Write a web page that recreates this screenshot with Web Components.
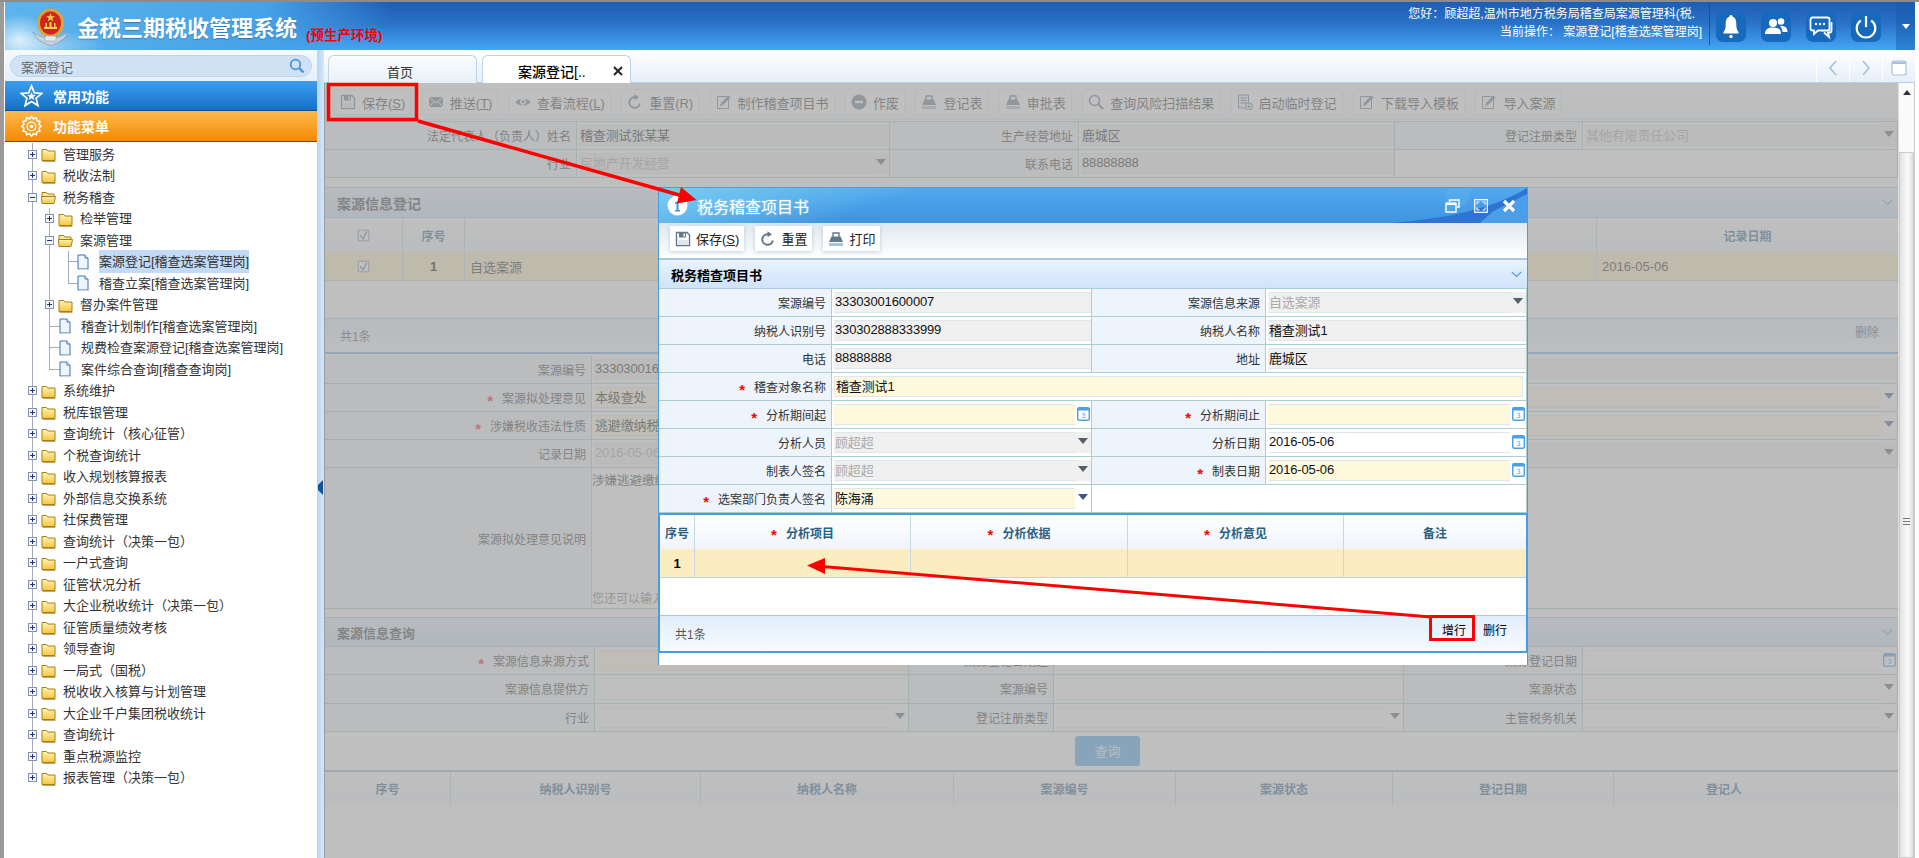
<!DOCTYPE html>
<html lang="zh">
<head>
<meta charset="utf-8">
<title>金税三期税收管理系统</title>
<style>
  html, body { margin: 0; height: 100%; overflow: hidden; background: #fff; }
  body { font-family: "Liberation Sans", "Noto Sans CJK SC", sans-serif; font-size: 12px; color: #333; }
</style>
</head>
<body>
<tax-app>
  <app-header slot="header"></app-header>
  <side-nav slot="side"></side-nav>
  <tab-strip slot="tabs"></tab-strip>

  <tool-bar>
    <tool-button icon="save" hot="S">保存</tool-button>
    <tool-button icon="mail" hot="T">推送</tool-button>
    <tool-button icon="eye" hot="L">查看流程</tool-button>
    <tool-button icon="reload">重置(R)</tool-button>
    <tool-button icon="edit">制作稽查项目书</tool-button>
    <tool-button icon="minus">作废</tool-button>
    <tool-button icon="print">登记表</tool-button>
    <tool-button icon="print">审批表</tool-button>
    <tool-button icon="search">查询风险扫描结果</tool-button>
    <tool-button icon="docplus">启动临时登记</tool-button>
    <tool-button icon="edit">下载导入模板</tool-button>
    <tool-button icon="edit">导入案源</tool-button>
  </tool-bar>

  <form-grid cols="252px 313px 189px 316px 188px 315px" top>
    <f-label>法定代表人（负责人）姓名</f-label><f-val kind="ro">稽查测试张某某</f-val>
    <f-label>生产经营地址</f-label><f-val kind="ro">鹿城区</f-val>
    <f-label>登记注册类型</f-label><f-val kind="dis" tail="select">其他有限责任公司</f-val>
    <f-label>行业</f-label><f-val kind="dis" tail="select">房地产开发经营</f-val>
    <f-label>联系电话</f-label><f-val kind="ro">88888888</f-val>
    <f-val kind="none" span="2"></f-val>
  </form-grid>

  <section-bar label="案源信息登记" size="14" style="margin-top:9px;height:31px"></section-bar>
  <grid-row cols="78px 62px 1fr 301px" kind="head">
    <grid-cell><ui-icon name="check" size="13"></ui-icon></grid-cell>
    <grid-cell>序号</grid-cell>
    <grid-cell req>案源信息来源</grid-cell>
    <grid-cell>记录日期</grid-cell>
  </grid-row>
  <grid-row cols="78px 62px 1fr 301px" kind="sel">
    <grid-cell><ui-icon name="check" size="13"></ui-icon></grid-cell>
    <grid-cell strong>1</grid-cell>
    <grid-cell align="left">自选案源</grid-cell>
    <grid-cell align="left">2016-05-06</grid-cell>
  </grid-row>
  <grid-blank></grid-blank>
  <grid-foot pad="15" under>
    <span>共1条</span>
    <span slot="actions">删除</span>
  </grid-foot>

  <form-grid cols="267px 1fr" style="margin-top:2px">
    <f-label>案源编号</f-label><f-val kind="ro">33303001600007</f-val>
    <f-label req>案源拟处理意见</f-label><f-val kind="req" tail="select">本级查处</f-val>
    <f-label req>涉嫌税收违法性质</f-label><f-val kind="req" tail="select">逃避缴纳税款</f-val>
    <f-label>记录日期</f-label><f-val kind="dis" tail="select">2016-05-06</f-val>
    <f-label tall>案源拟处理意见说明</f-label>
    <note-area hint="您还可以输入">涉嫌逃避缴纳税款</note-area>
  </form-grid>

  <section-bar label="案源信息查询" size="13" style="margin-top:9px;height:30px"></section-bar>
  <form-grid cols="270px 314px 145px 350px 179px 315px" row="28.33">
    <f-label req>案源信息来源方式</f-label><f-val kind="req"></f-val>
    <f-label>案源登记日期起</f-label><f-val kind="plain"></f-val>
    <f-label>案源登记日期</f-label><f-val kind="plain" tail="date"></f-val>
    <f-label>案源信息提供方</f-label><f-val kind="plain"></f-val>
    <f-label>案源编号</f-label><f-val kind="plain"></f-val>
    <f-label>案源状态</f-label><f-val kind="plain" tail="select"></f-val>
    <f-label>行业</f-label><f-val kind="plain" tail="select"></f-val>
    <f-label>登记注册类型</f-label><f-val kind="plain" tail="select"></f-val>
    <f-label>主管税务机关</f-label><f-val kind="plain" tail="select"></f-val>
  </form-grid>
  <query-row>查询</query-row>
  <grid-row cols="126px 250px 253px 222px 217px 221px 284px" kind="head" tall>
    <grid-cell>序号</grid-cell><grid-cell>纳税人识别号</grid-cell><grid-cell>纳税人名称</grid-cell>
    <grid-cell>案源编号</grid-cell><grid-cell>案源状态</grid-cell><grid-cell>登记日期</grid-cell><grid-cell style="padding-right:64px">登记人</grid-cell>
  </grid-row>

  <tax-dialog slot="dialog" label="税务稽查项目书">
    <dialog-tools>
      <tool-button flat icon="save" hot="S">保存</tool-button>
      <tool-button flat icon="reload">重置</tool-button>
      <tool-button flat icon="print">打印</tool-button>
    </dialog-tools>
    <section-bar label="税务稽查项目书" size="13" style="height:30px;--section-ink:#000;--chevron-ink:#4a9be0"></section-bar>
    <form-grid cols="173px 260px 174px 1fr">
      <f-label>案源编号</f-label><f-val kind="ro">33303001600007</f-val>
      <f-label>案源信息来源</f-label><f-val kind="dis" tail="select">自选案源</f-val>
      <f-label>纳税人识别号</f-label><f-val kind="ro">330302888333999</f-val>
      <f-label>纳税人名称</f-label><f-val kind="ro">稽查测试1</f-val>
      <f-label>电话</f-label><f-val kind="ro">88888888</f-val>
      <f-label>地址</f-label><f-val kind="ro">鹿城区</f-val>
      <f-label req>稽查对象名称</f-label><f-val kind="req" span="3" boxed>稽查测试1</f-val>
      <f-label req>分析期间起</f-label><f-val kind="req" tail="date"></f-val>
      <f-label req>分析期间止</f-label><f-val kind="req" tail="date"></f-val>
      <f-label>分析人员</f-label><f-val kind="dis" tail="select">顾超超</f-val>
      <f-label>分析日期</f-label><f-val kind="plain" tail="date">2016-05-06</f-val>
      <f-label>制表人签名</f-label><f-val kind="dis" tail="select">顾超超</f-val>
      <f-label req>制表日期</f-label><f-val kind="req" tail="date">2016-05-06</f-val>
      <f-label req>选案部门负责人签名</f-label><f-val kind="req" tail="select">陈海涌</f-val>
      <f-val kind="none" span="2"></f-val>
    </form-grid>
    <dialog-grid>
      <grid-row cols="35px 216px 217px 216px 1fr" kind="head">
        <grid-cell>序号</grid-cell><grid-cell req>分析项目</grid-cell><grid-cell req>分析依据</grid-cell>
        <grid-cell req>分析意见</grid-cell><grid-cell>备注</grid-cell>
      </grid-row>
      <grid-row cols="35px 216px 217px 216px 1fr" kind="sel">
        <grid-cell strong>1</grid-cell><grid-cell></grid-cell><grid-cell></grid-cell><grid-cell></grid-cell><grid-cell></grid-cell>
      </grid-row>
      <grid-blank></grid-blank>
      <grid-foot pad="15">
        <span>共1条</span>
        <span slot="actions" style="color:#000">增行</span>
        <span slot="actions" style="color:#000">删行</span>
      </grid-foot>
    </dialog-grid>
  </tax-dialog>

  <callout-layer slot="callouts"></callout-layer>
</tax-app>

<script>
const ICONS = {
  save: `<path d="M1.500 1.500h10.500l2.500 2.500v10.500h-13z" fill="#fff" stroke="currentColor" stroke-width="1.400"/><path d="M4 1.500h7v5H4z" fill="currentColor"/><path d="M8.500 2.500h1.500v3H8.500z" fill="#fff"/><path d="M2 9h12v5H2z" fill="#dfe6ec"/>`,
  mail: `<path d="M1 3h14v10H1z" fill="currentColor"/><path d="M1 3l7 6 7-6M1 13l5-5.500M15 13l-5-5.500" fill="none" stroke="#fff" stroke-width="1"/>`,
  eye: `<path d="M0.500 8C3 3.500 13 3.500 15.500 8 13 12.500 3 12.500 0.500 8z" fill="currentColor"/><circle cx="8" cy="7.800" r="3" fill="#fff"/><circle cx="8" cy="7.800" r="1.600" fill="currentColor"/>`,
  reload: `<path d="M12.800 9.500A5.300 5.300 0 1 1 8 3.200" fill="none" stroke="currentColor" stroke-width="2"/><path d="M7.500 0.300l4.500 3-4.500 3z" fill="currentColor"/>`,
  edit: `<path d="M1.500 2.500h11v12h-11z" fill="#fff" stroke="currentColor"/><path d="M4 12l1-3 7.500-7.500 2 2L7 11z" fill="currentColor"/>`,
  minus: `<circle cx="8" cy="8" r="7.500" fill="currentColor"/><path d="M4 6.800h8v2.400H4z" fill="#fff"/>`,
  print: `<path d="M5 6.500V2h6v4.500" fill="#fff" stroke="currentColor" stroke-width="1.400"/><path d="M3.500 5.500h9L15 11H1z" fill="currentColor"/><path d="M1 12h14v3H1z" fill="#a9c2d8"/>`,
  search: `<circle cx="6.500" cy="6.500" r="5" fill="#fff" fill-opacity=".4" stroke="currentColor" stroke-width="1.600"/><path d="M10.500 10.500l4.500 4.500" stroke="currentColor" stroke-width="2.400"/>`,
  docplus: `<path d="M1.500 1h10v13h-10z" fill="#eef" stroke="currentColor"/><path d="M3.500 4h6M3.500 6.500h6M3.500 9h6" stroke="currentColor"/><circle cx="12" cy="12.500" r="3.500" fill="#fff" stroke="currentColor"/><path d="M10 12.500h4M12 10.500v4" stroke="currentColor"/>`,
  check: `<path d="M1.500 1.500h13v13h-13z" fill="#fff" stroke="currentColor"/><path d="M4 7.500l3.500 4.500L12 3" fill="none" stroke="#55708a" stroke-width="1.500"/>`
};

class UiElement extends HTMLElement {
  connectedCallback() {
    if (this.shadowRoot) return;
    this.attachShadow({ mode: "open" }).innerHTML = this.render();
  }
  flag(name) { return this.hasAttribute(name); }
  attr(name, fallback) { return this.getAttribute(name) ?? fallback; }
}

class UiIcon extends UiElement {
  render() {
    const size = this.attr("size", 16);
    return `<style>:host{display:inline-flex;flex:none;color:#62788c}</style>
      <svg width="${size}" height="${size}" viewBox="0 0 16 16">${ICONS[this.attr("name")] || ""}</svg>`;
  }
}

class TaxApp extends UiElement {
  render() {
    return `<style>
      :host{display:block;position:relative;width:1919px;height:858px;overflow:hidden;box-sizing:border-box;
        border-top:2px solid #8c8c8c;background:#fff}
      .frame{display:flex;flex-direction:column;height:100%;box-sizing:border-box;padding:0 4px 0 1px;
        border-left:4px solid #9a9a9a}
      .body{display:flex;flex:1;min-height:0}
      .main{width:1591px;display:flex;flex-direction:column;min-height:0}
      .work{flex:1;display:flex;min-height:0;position:relative}
      .page{width:1573px;box-sizing:content-box;border-left:1px solid #888;display:flex;flex-direction:column;overflow:hidden;background:#fff}
      .mask{position:absolute;left:0;top:0;bottom:0;width:1574px;background:rgba(164,164,164,.7)}
      .dialog-place{position:absolute;left:334px;top:104px}
      .scroll{width:17px;background:#fafafa;box-sizing:border-box;border-left:1px solid #ddd;border-right:1px solid #ccc;
        display:flex;flex-direction:column;align-items:center}
      .arrow{height:69px;padding-top:7px;box-sizing:border-box;color:#333}
      .arrow i{display:block;width:0;height:0;border:4px solid transparent;border-top:0;border-bottom:5px solid #333}
      .thumb{flex:1;width:100%;background:linear-gradient(90deg,#e2e2e2,#fafafa 60%,#ddd);border:1px solid #ccc;box-sizing:border-box;
        display:flex;flex-direction:column;padding-top:365px;align-items:center;gap:2px}
      .thumb i{display:block;width:7px;height:1px;background:#777}
      .split{width:7px;background:linear-gradient(90deg,#b6d4f4,#d6e7fa);padding-top:430px;box-sizing:border-box}
      .split svg{display:block;margin-left:1px}
    </style>
    <div class="frame">
      <slot name="header"></slot>
      <div class="body">
        <slot name="side"></slot>
        <div class="split"><svg width="5" height="15" viewBox="0 0 5 15"><path d="M5 0v15L0 10V5z" fill="#12529a"/></svg></div>
        <div class="main">
          <slot name="tabs"></slot>
          <div class="work">
            <div class="page"><slot></slot></div>
            <div class="scroll">
              <div class="arrow"><i></i></div>
              <div class="thumb"><i></i><i></i><i></i></div>
            </div>
            <div class="mask"></div>
            <div class="dialog-place"><slot name="dialog"></slot></div>
          </div>
        </div>
      </div>
    </div>
    <slot name="callouts"></slot>`;
  }
}

class AppHeader extends UiElement {
  render() {
    const tile = (body) => `<div class="tile"><svg width="30" height="30" viewBox="0 0 30 30">${body}</svg></div>`;
    return `<style>
      :host{display:flex;height:48px;width:1910px;color:#fff;flex:none;
        background:
          radial-gradient(ellipse 34px 26px at 14px 38px,rgba(255,255,255,.75),transparent),
          radial-gradient(ellipse 60px 16px at 40px 44px,rgba(255,255,255,.4),transparent),
          linear-gradient(95deg,#5db4ec 0,#46a2e8 260px,rgba(60,140,225,.0) 385px),
          linear-gradient(180deg,#1e5db4,#2a72c8 45%,#45a6f6);}
      .logo{margin:6px 0 0 27px;flex:none}
      .title{margin:0 0 0 8px;font-size:22px;font-weight:700;line-height:48px;height:48px;white-space:nowrap;
        font-family:"Noto Sans CJK SC",sans-serif;letter-spacing:0;text-shadow:0 1px 1px rgba(0,40,90,.35)}
      .env{margin:10px 0 0 9px;font-size:13.500px;color:#f40000;font-weight:700;line-height:48px;white-space:nowrap}
      .who{margin-left:auto;text-align:right;padding:3px 7px 0 0;white-space:nowrap;line-height:18px;font-size:12px}
      .who div:first-child{margin-right:7px}
      .sep{width:1px;height:42px;margin-top:1px;background:#14549f}
      .tiles{display:flex;gap:15px;padding:10px 15px 0 6px}
      .tile{width:30px;height:30px;border-radius:7px;background:#1769bb}
      .tile svg{display:block}
      .drop{width:19px;background:rgba(20,90,170,.45);display:flex;align-items:center;justify-content:center}
      .drop i{display:block;border:4px solid transparent;border-bottom:0;border-top:5px solid #fff;border-left-width:4.500px;border-right-width:4.500px}
    </style>
    <svg class="logo" width="37" height="38" viewBox="0 0 37 38">
      <path d="M1 24c3 8 10 11 17.500 13.500C26 35 33 32 36 24c-4 3-9 6-17.500 6S5 27 1 24z" fill="#c9d3dc" stroke="#7f8f9f" stroke-width=".6"/>
      <ellipse cx="18.500" cy="15" rx="13.500" ry="14.500" fill="#d7a53a"/>
      <ellipse cx="18.500" cy="15" rx="10.500" ry="11.500" fill="#d3241f"/>
      <path d="M18.500 5l1.100 3.200h3.400l-2.700 2 1 3.200-2.800-2-2.800 2 1-3.200-2.700-2h3.400z" fill="#f6d34a"/>
      <path d="M12 19h13v2H12zM13.500 15h1.500v4h-1.500zM22 15h1.500v4H22zM17.500 14h2v5h-2z" fill="#f6d34a"/>
      <path d="M13 28h11v5H13z" fill="#e4e9ee" stroke="#8a98a6" stroke-width=".5"/>
    </svg>
    <div class="title">金税三期税收管理系统</div>
    <div class="env">(预生产环境)</div>
    <div class="who">
      <div>您好：顾超超,温州市地方税务局稽查局案源管理科(税.</div>
      <div>当前操作： 案源登记[稽查选案管理岗]</div>
    </div>
    <div class="sep"></div>
    <div class="tiles">
      ${tile(`<path d="M15 3c-1 0-1.600.8-1.600 1.700C10 5.800 9.700 9 9.700 13c0 3.500-1 5.500-2.200 7v1.500h15V20c-1.200-1.500-2.200-3.500-2.200-7 0-4-.3-7.200-3.700-8.300C16.600 3.800 16 3 15 3z" fill="#fff"/><circle cx="15" cy="24.500" r="1.700" fill="#fff"/>`)}
      ${tile(`<circle cx="12" cy="11" r="4" fill="#fff"/><path d="M4 22c0-5 3-6.500 8-6.500s8 1.500 8 6.500z" fill="#fff"/><circle cx="20" cy="9.500" r="3.300" fill="#fff"/><path d="M19 14c5-.5 7.500 1.500 7.500 6h-5c-.2-2.500-1-4.500-2.500-6z" fill="#fff"/>`)}
      ${tile(`<path d="M6.500 5.500h15a2 2 0 0 1 2 2v9a2 2 0 0 1-2 2H12l-4 3.500V18.500H6.500a2 2 0 0 1-2-2v-9a2 2 0 0 1 2-2z" fill="none" stroke="#fff" stroke-width="1.800"/><circle cx="10" cy="12" r="1.200" fill="#fff"/><circle cx="14" cy="12" r="1.200" fill="#fff"/><circle cx="18" cy="12" r="1.200" fill="#fff"/><path d="M25.500 10v8.500c0 1.500-.7 2-2 2H22l1 4.500-5-4.500" fill="none" stroke="#fff" stroke-width="1.800"/>`)}
      ${tile(`<path d="M9.800 8.500a9.300 9.300 0 1 0 10.400 0" fill="none" stroke="#fff" stroke-width="2.200"/><path d="M15 4v11" stroke="#fff" stroke-width="2.200"/>`)}
    </div>
    <div class="drop"><i></i></div>`;
  }
}

const TREE = [
  ["管理服务", 1, "plus"], ["税收法制", 1, "plus"], ["税务稽查", 1, "minus"],
  ["检举管理", 2, "plus"], ["案源管理", 2, "minus"],
  ["案源登记[稽查选案管理岗]", 3, "leaf", "on"], ["稽查立案[稽查选案管理岗]", 3, "leaf", "end3"],
  ["督办案件管理", 2, "plus"], ["稽查计划制作[稽查选案管理岗]", 2, "leaf"],
  ["规费检查案源登记[稽查选案管理岗]", 2, "leaf"], ["案件综合查询[稽查查询岗]", 2, "leaf", "end2"],
  ["系统维护", 1, "plus"], ["税库银管理", 1, "plus"], ["查询统计（核心征管）", 1, "plus"],
  ["个税查询统计", 1, "plus"], ["收入规划核算报表", 1, "plus"], ["外部信息交换系统", 1, "plus"],
  ["社保费管理", 1, "plus"], ["查询统计（决策一包）", 1, "plus"], ["一户式查询", 1, "plus"],
  ["征管状况分析", 1, "plus"], ["大企业税收统计（决策一包）", 1, "plus"], ["征管质量绩效考核", 1, "plus"],
  ["领导查询", 1, "plus"], ["一局式（国税）", 1, "plus"], ["税收收入核算与计划管理", 1, "plus"],
  ["大企业千户集团税收统计", 1, "plus"], ["查询统计", 1, "plus"], ["重点税源监控", 1, "plus"],
  ["报表管理（决策一包）", 1, "plus", "last"]
];

class SideNav extends UiElement {
  render() {
    return `<style>
      :host{display:block;width:312px;flex:none;background:#fff;overflow:hidden;font-size:13px}
      .find{height:31px;box-sizing:border-box;padding:5px 5px 3px;background:linear-gradient(#f6fafe,#e4effa)}
      .pill{height:22px;border-radius:11px;background:#d0e2f5;border:1px solid #bcd4ec;box-sizing:border-box;
        display:flex;align-items:center;padding:0 6px 0 10px;color:#666;justify-content:space-between}
      .bar{height:30px;display:flex;align-items:center;gap:10px;padding-left:15px;color:#fff;font-size:14px;font-weight:700;box-sizing:border-box}
      .fav{background:linear-gradient(#3f9fee,#1470c6);border-bottom:1px solid #10508f}
      .menu{background:linear-gradient(#fdb84c,#f58a04);border-bottom:1px solid #1c5a9c;height:31px}
      .tree{padding-top:1.250px}
    </style>
    <div class="find"><div class="pill">案源登记
      <svg width="16" height="16" viewBox="0 0 16 16"><circle cx="6.500" cy="6.500" r="4.800" fill="none" stroke="#4d94d6" stroke-width="1.800"/><path d="M10 10l4.500 4.500" stroke="#4d94d6" stroke-width="2.400"/></svg>
    </div></div>
    <div class="bar fav">
      <svg width="23" height="24" viewBox="0 0 24 24"><path d="M12 1.500l3 7.200 7.800.6-6 5 1.900 7.700L12 17.800 5.300 22l1.900-7.700-6-5 7.800-.6z" fill="none" stroke="#fff" stroke-width="1.800"/><path d="M12 8l1.400 3h3.100l-2.500 2 1 3.200-3-1.800-3 1.800 1-3.200-2.500-2h3.100z" fill="#fff"/></svg>
      常用功能</div>
    <div class="bar menu">
      <svg width="23" height="24" viewBox="0 0 24 24"><path d="M12 2l2 2.500 3-1 .8 3 3 .8-1 3 2.200 2-2.200 2 1 3-3 .8-.8 3-3-1-2 2.500-2-2.500-3 1-.8-3-3-.8 1-3-2.200-2 2.200-2-1-3 3-.8.8-3 3 1z" fill="none" stroke="#fff" stroke-width="1.600"/><circle cx="12" cy="12.500" r="4.500" fill="none" stroke="#fff" stroke-width="1.400"/><circle cx="12" cy="12.500" r="1.800" fill="#fff"/></svg>
      功能菜单</div>
    <div class="tree">${TREE.map(([t, l, k, f]) => `<tree-row level="${l}" kind="${k}" ${f ? `mark="${f}"` : ""}>${t}</tree-row>`).join("")}</div>`;
  }
}

class TreeRow extends UiElement {
  render() {
    const level = Number(this.attr("level"));
    const kind = this.attr("kind");
    const mark = this.attr("mark", "");
    const pad = kind === "leaf" ? (level === 3 ? 72 : 54) : (level === 2 ? 40 : 23);
    const ink = "linear-gradient(#a3adba,#a3adba)";
    const lines = [`${ink} 27px 0/1px ${mark === "last" ? "50%" : "100%"} no-repeat`];
    if (level >= 2 && mark !== "end2") lines.push(`${ink} 44px 0/1px 100% no-repeat`);
    if (mark === "end2") lines.push(`${ink} 44px 0/1px 50% no-repeat`);
    if (level === 3) lines.push(`${ink} 63px 0/1px ${mark === "end3" ? "50%" : "100%"} no-repeat`);
    if (kind === "leaf") lines.push(`${ink} ${level === 3 ? 63 : 44}px 50%/${level === 3 ? 10 : 11}px 1px no-repeat`);
    const box = `<svg width="9" height="9" viewBox="0 0 9 9"><rect x=".5" y=".5" width="8" height="8" fill="#f4f6fa" stroke="#8793a8"/><path d="M2 4.500h5${kind === "plus" ? "M4.500 2v5" : ""}" stroke="#23336f"/></svg>`;
    const grad = `<defs><linearGradient id="f" x1="0" y1="0" x2="0" y2="1"><stop offset="0" stop-color="#fff4b4"/><stop offset="1" stop-color="#f5c544"/></linearGradient></defs>`;
    const folder = kind === "plus"
      ? `<svg width="15" height="16" viewBox="0 0 15 16">${grad}<path d="M1 3.500h4.500L7 5h7v9.500H1z" fill="url(#f)" stroke="#a97c14"/><path d="M1.500 15.500h13" stroke="#c8a860"/></svg>`
      : `<svg width="15" height="16" viewBox="0 0 15 16">${grad}<path d="M1 3.500h4.500L7 5h6v3H1z" fill="#fbe9a0" stroke="#a97c14"/><path d="M1 14.500l-.5-7h13.500l.5 0-1.500 7z" fill="url(#f)" stroke="#a97c14"/></svg>`;
    const doc = `<svg width="12" height="16" viewBox="0 0 12 16"><path d="M1 1h7l3 3v11H1z" fill="#eef5fd" stroke="#3f73b5"/><path d="M8 1v3h3" fill="#fff" stroke="#3f73b5"/><path d="M2 15.500h10" stroke="#cdd6e2"/></svg>`;
    return `<style>
      :host{display:flex;align-items:center;height:21.500px;padding-left:${pad}px;white-space:nowrap;
        background:${lines.join(",")};color:#333}
      svg{flex:none;display:block}
      .gap{width:4px;flex:none}
      .t{margin-left:${kind === "leaf" ? 10 : 7}px;line-height:23px;height:23px}
      .on{background:#c2daf6}
    </style>
    ${kind === "leaf" ? doc : box + '<span class="gap"></span>' + folder}
    <span class="t ${mark === "on" ? "on" : ""}"><slot></slot></span>`;
  }
}

class TabStrip extends UiElement {
  render() {
    return `<style>
      :host{display:flex;height:33px;flex:none;align-items:flex-end;box-sizing:border-box;padding-left:4px;
        background:linear-gradient(#fff,#e6eff9);border-bottom:1px solid #b4d0ea}
      .tab{width:149px;height:28px;box-sizing:border-box;border:1px solid #bcd3e8;border-bottom:0;border-radius:6px 6px 0 0;
        background:linear-gradient(#fbfdff,#e8f0f8);display:flex;align-items:center;justify-content:center;font-size:13px;
        margin-right:5px;margin-bottom:-1px;padding:3px 5px 0 0}
      .on{background:#fff;font-size:14px;color:#000;justify-content:flex-start;padding:3px 0 0 35px;gap:27px;font-weight:500}
      .on svg{display:block}
      .nav{margin-left:auto;display:flex;height:32px}
      .nav div{width:33px;border-left:1px solid #fff;display:flex;align-items:center;justify-content:center;padding-top:3px;box-sizing:border-box}
    </style>
    <div class="tab">首页</div>
    <div class="tab on">案源登记[..
      <svg width="10" height="10" viewBox="0 0 10 10"><path d="M1 1l8 8M9 1l-8 8" stroke="#222" stroke-width="2"/></svg>
    </div>
    <div class="nav">
      <div><svg width="10" height="16" viewBox="0 0 10 16"><path d="M8 1L2 8l6 7" fill="none" stroke="#a9c3dc" stroke-width="1.700"/></svg></div>
      <div><svg width="10" height="16" viewBox="0 0 10 16"><path d="M2 1l6 7-6 7" fill="none" stroke="#a9c3dc" stroke-width="1.700"/></svg></div>
      <div><svg width="16" height="16" viewBox="0 0 16 16"><rect x="1" y="1" width="14" height="14" rx="2" fill="#fff" stroke="#a9c3dc" stroke-width="1.200"/><path d="M1 1.500h14v2.500H1z" fill="#a9c3dc"/></svg></div>
    </div>`;
  }
}

class ToolBar extends UiElement {
  render() {
    return `<style>
      :host{display:flex;height:37px;flex:none;box-sizing:border-box;padding:7px 0 0 10px;gap:12.400px;align-items:flex-start;
        background:linear-gradient(#fff,#f4f7fb);border-bottom:1px solid #dfe8ec;width:100%}
    </style><slot></slot>`;
  }
}

class ToolButton extends UiElement {
  render() {
    const hot = this.attr("hot");
    const flat = this.flag("flat");
    return `<style>
      :host{display:inline-flex;align-items:center;gap:${flat ? 5 : 6}px;height:${flat ? 25 : 24}px;box-sizing:border-box;padding:0 5px;
        font-size:13px;white-space:nowrap;color:${flat ? "#222" : "#333"};background:#fff;
        box-shadow:${flat ? "0 1px 4px rgba(120,140,160,.4)" : "0 0 2px rgba(90,90,90,.3)"}}
      u{text-underline-offset:1px}
    </style>
    <ui-icon name="${this.attr("icon")}" size="16"></ui-icon>
    <span><slot></slot>${hot ? `(<u>${hot}</u>)` : ""}</span>`;
  }
}

class FormGrid extends UiElement {
  render() {
    return `<style>
      :host{display:grid;flex:none;grid-template-columns:${this.attr("cols")};grid-auto-rows:${this.attr("row", 28)}px;
        ${this.flag("top") ? "border-top:1px solid #a9cfcf;margin-top:1px;" : ""}}
    </style><slot></slot>`;
  }
}

class FLabel extends UiElement {
  render() {
    return `<style>
      :host{display:flex;align-items:center;justify-content:flex-end;box-sizing:border-box;padding-right:5px;background:#edf4fb;
        border-right:1px solid #a9cfcf;border-bottom:1px solid #a9cfcf;font-size:12px;color:#333;white-space:nowrap;overflow:hidden;
        ${this.flag("tall") ? "grid-row:span 5;height:141px;" : ""}}
      b{color:#f00;font:700 15px/12px "Liberation Sans",sans-serif;margin-right:9px;transform:translateY(3px)}
    </style>${this.flag("req") ? "<b>*</b>" : ""}<slot></slot>`;
  }
}

class FVal extends UiElement {
  render() {
    const kind = this.attr("kind", "plain");
    const tail = this.attr("tail");
    const span = this.attr("span", 1);
    const fills = { ro: "#f0f0f0", dis: "#f0f0f0", req: "#fef9dd", plain: "#fff", none: "#fff" };
    const inks = { ro: "#111", dis: "#aaa", req: "#111", plain: "#111", none: "#111" };
    const caret = kind === "req" ? "#3c5590" : "#555f6a";
    const tailHtml = tail === "select"
      ? `<div class="tail ${kind === "dis" ? "grey" : ""}"><svg width="10" height="6" viewBox="0 0 10 6"><path d="M0 0h10L5 6z" fill="${caret}"/></svg></div>`
      : tail === "date"
        ? `<div class="tail"><svg width="13" height="15" viewBox="0 0 13 15"><rect x=".7" y="1.700" width="11.600" height="12.600" rx="1.500" fill="#fff" stroke="#4d9fe3" stroke-width="1.400"/><path d="M.7 2h11.600v2.500H.7z" fill="#4d9fe3"/><text x="6.500" y="12" font-size="7" text-anchor="middle" fill="#4d9fe3" font-family="Liberation Sans">3</text></svg></div>`
        : "";
    return `<style>
      :host{display:flex;grid-column:span ${span};box-sizing:border-box;padding:3px 0 3px 2px;background:#fff;
        border-right:1px solid #a9cfcf;border-bottom:1px solid #a9cfcf;min-width:0;
        ${this.flag("boxed") ? "padding-right:3px;" : ""}}
      .box{flex:1;min-width:0;display:flex;align-items:center;box-sizing:border-box;padding:0 0 2px 1px;font-size:13px;letter-spacing:-.15px;
        background:${fills[kind]};color:${inks[kind]};white-space:nowrap;overflow:hidden;
        ${kind === "none" ? "" : `border:1px solid #dfe7ea;border-width:1px 0;`}
        ${this.flag("boxed") ? "border-width:1px;" : ""}}
      .tail{width:16px;flex:none;display:flex;align-items:center;justify-content:center;padding-bottom:3px;box-sizing:border-box}
      .grey{background:#f0f0f0}
    </style><div class="box"><slot></slot></div>${tailHtml}`;
  }
}

class NoteArea extends UiElement {
  render() {
    return `<style>
      :host{display:flex;flex-direction:column;justify-content:space-between;height:141px;box-sizing:border-box;background:#fff;
        border-bottom:1px solid #a9cfcf;padding:2px 0 2px 0;font-size:12.500px;white-space:nowrap}
      .hint{color:#777;font-size:12px}
    </style><div><slot></slot></div><div class="hint">${this.attr("hint")}</div>`;
  }
}

class SectionBar extends UiElement {
  render() {
    return `<style>
      :host{display:flex;flex:none;align-items:center;justify-content:space-between;box-sizing:border-box;padding:0 3px 0 12px;
        background:linear-gradient(#e8f3fe,#cfe3fa);border-top:1px solid #a9c4dd;border-bottom:1px solid #a9cfdf;
        font-size:${this.attr("size", 13)}px;font-weight:700;color:var(--section-ink,#3a3a3a)}
      svg{display:block;margin-right:2px}
    </style><span>${this.attr("label")}</span>
    <svg width="11" height="7" viewBox="0 0 11 7"><path d="M.8.800l4.700 4.700L10.200.8" fill="none" stroke="var(--chevron-ink,#7fa3c8)" stroke-width="1.200"/></svg>`;
  }
}

class GridRow extends UiElement {
  render() {
    const head = this.attr("kind") === "head";
    const tall = this.flag("tall");
    return `<style>
      :host{display:grid;flex:none;grid-template-columns:${this.attr("cols")};box-sizing:border-box;
        height:${head ? (tall ? 35 : 34) : 29}px;
        background:${head ? "linear-gradient(#fff,#f0f4fa)" : "#fbedc0"};
        ${head ? "" : "border-bottom:1px solid #b6d6e6;"}
        ${tall ? "border-top:2px solid #a2b8ca;" : ""}
        font-weight:${head ? 700 : 400};color:${head ? "#2a5f85" : "#222"}}
    </style><slot></slot>`;
  }
}

class GridCell extends UiElement {
  render() {
    const left = this.attr("align") === "left";
    return `<style>
      :host{display:flex;align-items:center;justify-content:${left ? "flex-start" : "center"};box-sizing:border-box;font-size:${left ? 13 : 12}px;
        border-right:1px solid #c6dae0;padding-left:${left ? 5 : 0}px;min-width:0;white-space:nowrap;overflow:hidden;
        ${this.flag("strong") ? "font-weight:700;font-size:13px;color:#000;" : ""}}
      :host(:last-child){border-right:0}
      b{color:#f00;font:700 15px/12px "Liberation Sans",sans-serif;margin-right:9px;transform:translateY(3px)}
    </style>${this.flag("req") ? "<b>*</b>" : ""}<slot></slot>`;
  }
}

class GridBlank extends UiElement {
  render() { return `<style>:host{display:block;height:37px;flex:none;background:#fff}</style>`; }
}

class GridFoot extends UiElement {
  render() {
    const pad = this.attr("pad", 15);
    return `<style>
      :host{display:flex;flex:none;height:36px;box-sizing:border-box;align-items:center;justify-content:space-between;padding:0 19px 0 ${pad}px;
        background:linear-gradient(#e2eefb,#f6faff);border-top:1px solid #a8c8e8;color:#555;font-size:12px;
        ${this.flag("under") ? "border-bottom:2px solid #6fa8dc;" : ""}}
      .acts{display:flex;gap:17px;padding-bottom:9px}
    </style><div><slot></slot></div><div class="acts"><slot name="actions"></slot></div>`;
  }
}

class QueryRow extends UiElement {
  render() {
    return `<style>
      :host{display:flex;flex:none;height:38px;box-sizing:border-box;justify-content:center;padding:4px 8px 0 0;background:#fff}
      div{width:65px;height:30px;border-radius:3px;background:#47a6f0;color:#e8f2fa;font-size:13px;display:flex;align-items:center;justify-content:center}
    </style><div><slot></slot></div>`;
  }
}

class TaxDialog extends UiElement {
  render() {
    return `<style>
      :host{display:flex;flex-direction:column;width:870px;height:478px;box-sizing:border-box;background:#fff;
        border:solid #4a9be0;border-width:1px 1px 0 1px;overflow:hidden;font-size:12px}
      .bar{position:relative;height:35px;flex:none;display:flex;align-items:center;overflow:hidden;padding-left:8px;color:#fff;
        background:linear-gradient(160deg,#79cdf2 0,rgba(110,190,240,0) 90px),linear-gradient(#52a9ee,#3f94df)}
      .bar .art{position:absolute;right:0;top:0}
      .title{font-size:16px;margin-left:9px;text-shadow:0 0 2px rgba(255,255,255,.5);position:relative}
      .acts{margin-left:auto;display:flex;gap:14px;align-items:center;padding-right:11px;position:relative}
      svg{display:block;flex:none}
    </style>
    <div class="bar">
      <svg class="art" width="135" height="35" viewBox="0 0 135 35"><path d="M0 35C50 31 100 22 135 0V35z" fill="#2d74d3"/><path d="M88 35L100 24 135 6V35z" fill="#4b9fe8"/><path d="M55 0h25l-6 17-22 7z" fill="#5aaeee" fill-opacity=".55"/></svg>
      <svg width="21" height="21" viewBox="0 0 21 21"><circle cx="10.500" cy="10.500" r="10" fill="#fff"/><path d="M8 7.500l3.500-2V15H13v1.500H8V15h1.500V8.500L8 9z" fill="#3f94df"/></svg>
      <span class="title">${this.attr("label")}</span>
      <div class="acts">
        <svg width="15" height="14" viewBox="0 0 15 14"><path d="M4.500 3V1h9.500v7h-2" fill="none" stroke="#fff" stroke-width="1.400"/><path d="M1 4.500h10v8.500H1z" fill="none" stroke="#fff" stroke-width="1.400"/><path d="M1 3.500h10v2.500H1z" fill="#fff"/></svg>
        <svg width="14" height="14" viewBox="0 0 14 14"><rect x=".7" y=".7" width="12.600" height="12.600" fill="none" stroke="#fff" stroke-width="1.200"/><path d="M3 5.500V3h2.500M8.500 3H11v2.500M11 8.500V11H8.500M5.500 11H3V8.500" fill="none" stroke="#fff"/></svg>
        <svg width="14" height="14" viewBox="0 0 14 14"><path d="M2 2l10 10M12 2L2 12" stroke="#fff" stroke-width="3.200"/></svg>
      </div>
    </div>
    <slot></slot>`;
  }
}

class DialogTools extends UiElement {
  render() {
    return `<style>
      :host{display:flex;flex:none;height:36px;box-sizing:border-box;padding:3px 0 0 11px;gap:11px;align-items:flex-start;
        background:linear-gradient(#dfe8ef,#fff);border-bottom:1px solid #a9c9dc}
    </style><slot></slot>`;
  }
}

class DialogGrid extends UiElement {
  render() {
    return `<style>
      :host{display:flex;flex-direction:column;flex:none;border:2px solid #4a9be0;border-width:2px 2px 2px 1px;margin-right:-1px;background:#fff}
    </style><slot></slot>`;
  }
}

class CalloutLayer extends UiElement {
  render() {
    return `<style>
      :host{position:absolute;left:0;top:-2px;width:1919px;height:858px;pointer-events:none}
      svg{display:block}
    </style>
    <svg width="1919" height="858" viewBox="0 0 1919 858">
      <rect x="328.500" y="84.500" width="88" height="35" fill="none" stroke="#f00" stroke-width="3.500"/>
      <path d="M418 121L681 195.500" stroke="#f00" stroke-width="3.500"/>
      <path d="M696.500 200L681 187 677 203.500z" fill="#f00"/>
      <rect x="1430.500" y="616.500" width="43" height="23" fill="none" stroke="#f00" stroke-width="3"/>
      <path d="M1431 617L822 566.500" stroke="#f00" stroke-width="3"/>
      <path d="M807 565.500L825 558 825 574z" fill="#f00"/>
    </svg>`;
  }
}

customElements.define("ui-icon", UiIcon);
customElements.define("tax-app", TaxApp);
customElements.define("app-header", AppHeader);
customElements.define("side-nav", SideNav);
customElements.define("tree-row", TreeRow);
customElements.define("tab-strip", TabStrip);
customElements.define("tool-bar", ToolBar);
customElements.define("tool-button", ToolButton);
customElements.define("form-grid", FormGrid);
customElements.define("f-label", FLabel);
customElements.define("f-val", FVal);
customElements.define("note-area", NoteArea);
customElements.define("section-bar", SectionBar);
customElements.define("grid-row", GridRow);
customElements.define("grid-cell", GridCell);
customElements.define("grid-blank", GridBlank);
customElements.define("grid-foot", GridFoot);
customElements.define("query-row", QueryRow);
customElements.define("tax-dialog", TaxDialog);
customElements.define("dialog-tools", DialogTools);
customElements.define("dialog-grid", DialogGrid);
customElements.define("callout-layer", CalloutLayer);
</script>
</body>
</html>
